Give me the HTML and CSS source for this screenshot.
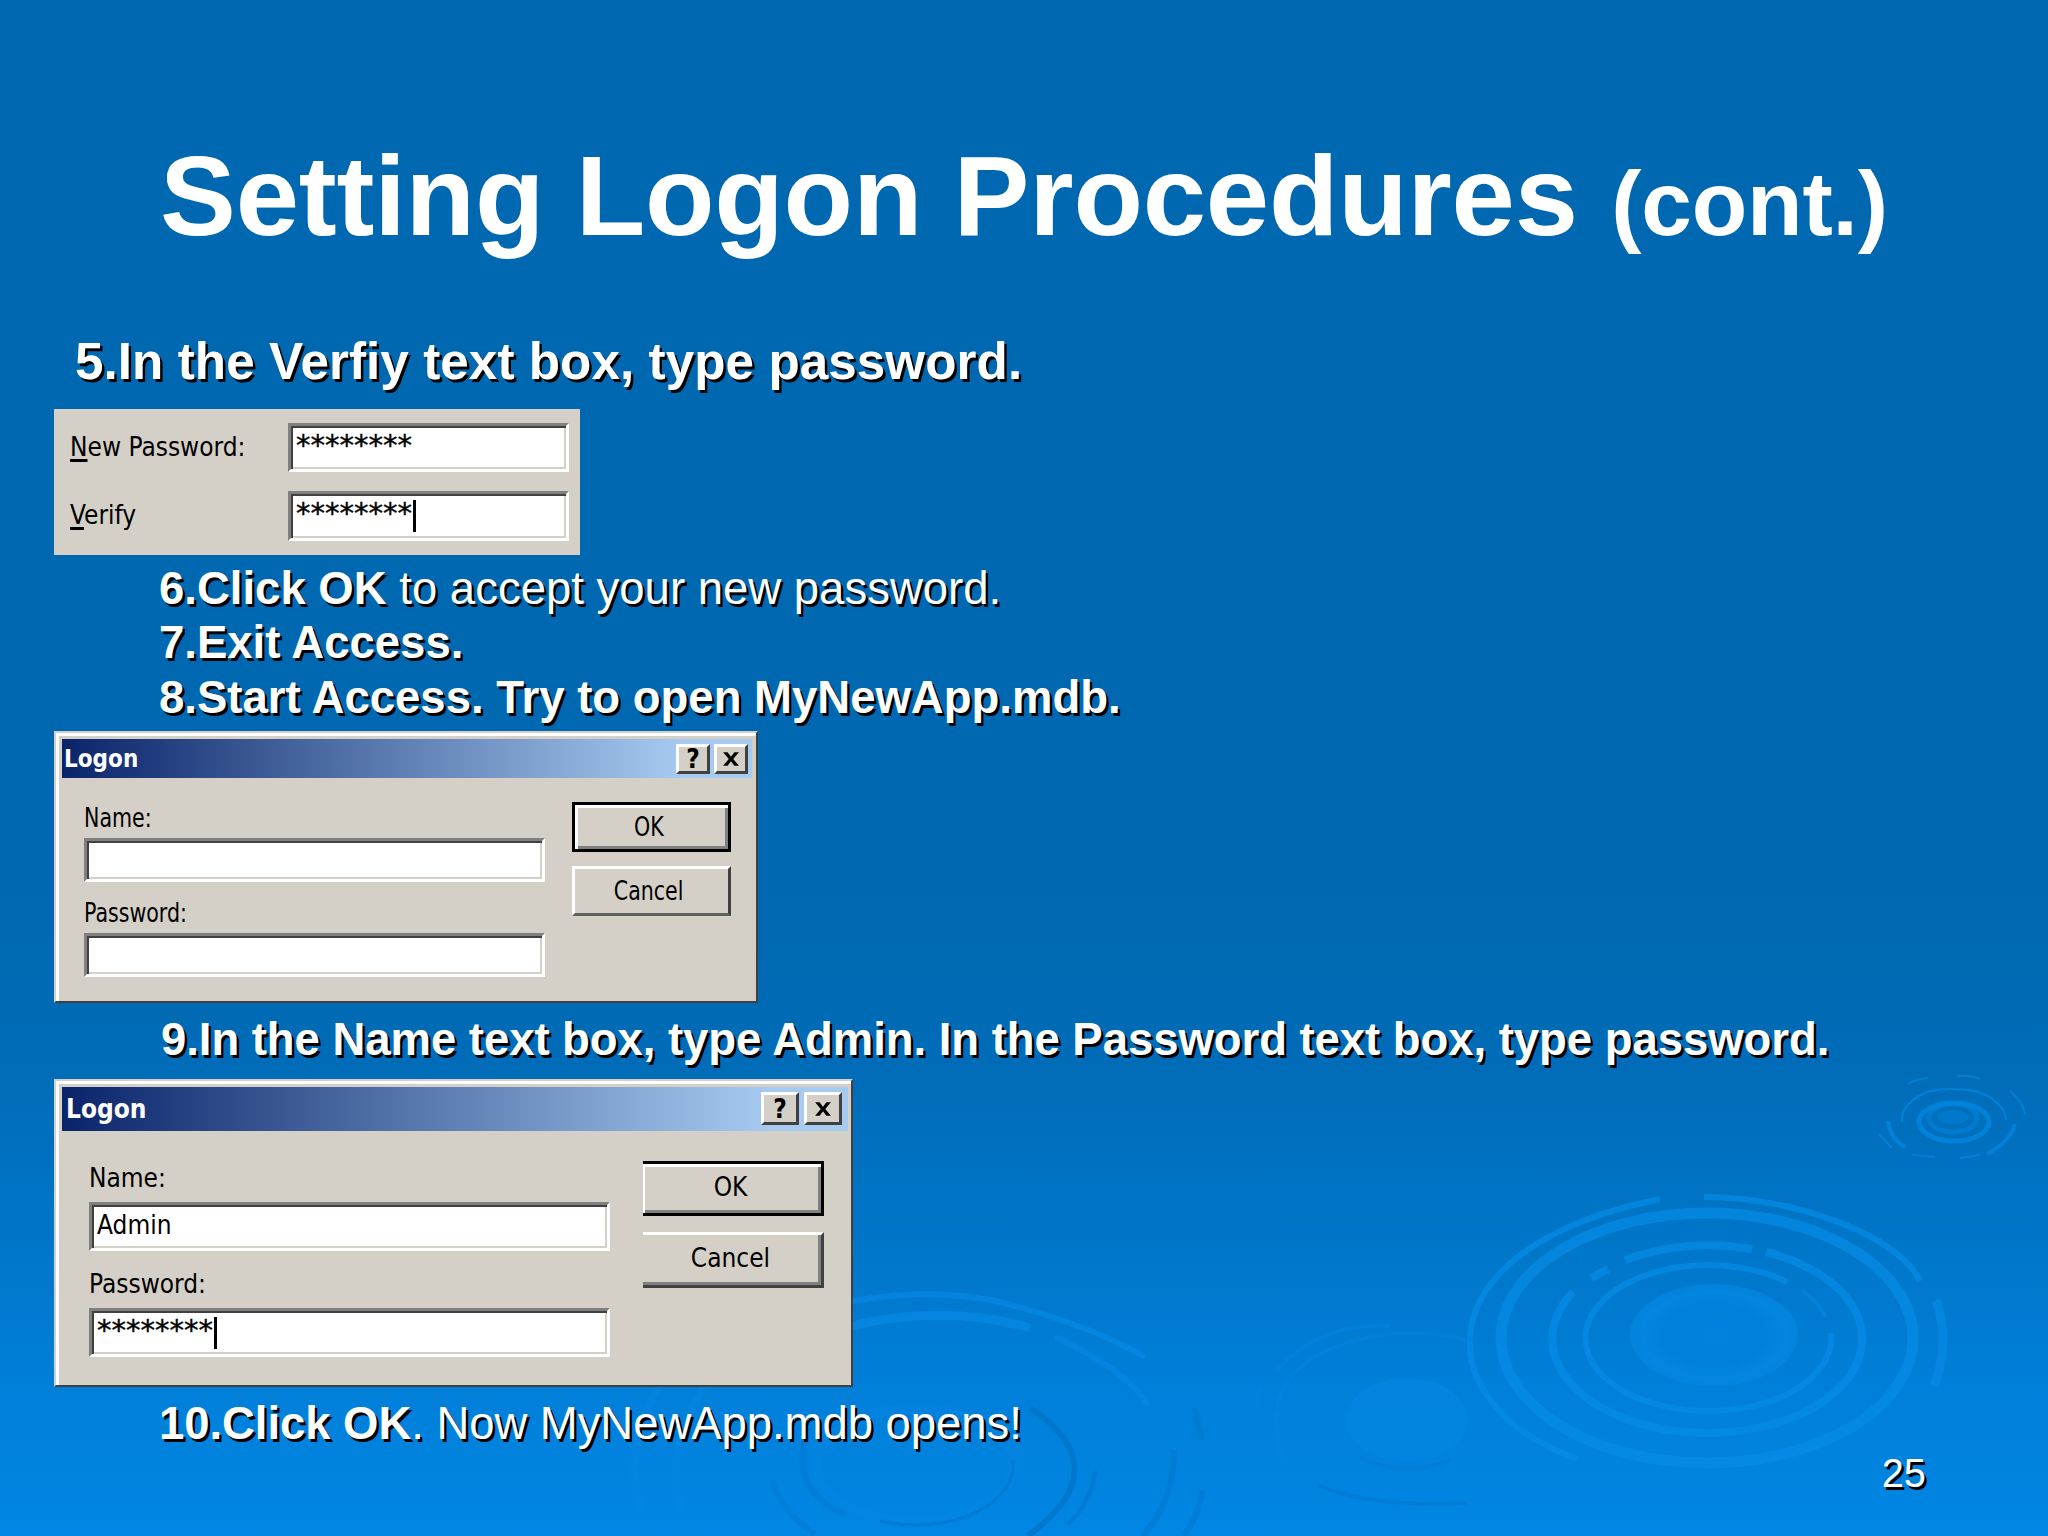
FILE: index.html
```html
<!DOCTYPE html>
<html lang="en">

<head>
    <meta charset="UTF-8">
    <meta name="viewport" content="width=device-width, initial-scale=1.0">
    <title>Setting Logon Procedures</title>
    <link rel="stylesheet" href="styles.css">
</head>

<body>
    <div class="slide">
        <svg class="ripples" viewBox="0 0 2048 1536" fill="none">
            <defs>
                <radialGradient id="drop">
                    <stop offset="0" stop-color="#0082df" />
                    <stop offset=".6" stop-color="#0080da" />
                    <stop offset=".85" stop-color="#0385e0" />
                    <stop offset="1" stop-color="#0386e1" stop-opacity=".7" />
                </radialGradient>
            </defs>
            <!-- large ripple -->
            <g stroke="#068ce6" stroke-opacity=".72">
                <path stroke-width="6" d="M1660 1199C1418 1248 1426 1405 1577 1459M1704 1197C1800 1197 1900 1238 1920 1281" />
                <path stroke-width="9" d="M1936 1300Q1951 1343 1934 1386" stroke-opacity=".6" />
                <ellipse stroke-width="11" cx="1707" cy="1338" rx="206" ry="125" />
                <path stroke-width="8" d="M1625 1260A155 94 0 0 1 1752 1249M1766 1252A155 94 0 1 1 1573 1292M1591 1278L1608 1269" />
                <path stroke-width="6" d="M1787 1282A123 73 0 1 0 1831 1333" />
                <path stroke-width="4" d="M1802 1290Q1820 1303 1825 1317" stroke-opacity=".5" />
            </g>
            <ellipse cx="1714" cy="1335" rx="84" ry="51" fill="url(#drop)" />
            <!-- small ripple -->
            <g stroke="#0386e0">
                <ellipse cx="1953" cy="1117" rx="16" ry="7" fill="#0079cd" stroke="none" />
                <ellipse cx="1953" cy="1118" rx="24" ry="14" stroke-width="5" stroke-opacity=".5" />
                <ellipse cx="1954" cy="1122" rx="35" ry="19" stroke-width="5" stroke-opacity=".8" />
                <path stroke-width="2" stroke-opacity=".8" d="M1902 1122A53 33 0 0 1 1930 1091Q1953 1087 1975 1091A53 33 0 0 1 2006 1120" />
                <path stroke-width="4" stroke-opacity=".8" d="M1888 1121Q1890 1138 1905 1147M2015 1124Q2010 1142 1987 1154" />
                <path stroke-width="2" stroke-opacity=".7" d="M1908 1084Q1915 1079 1928 1078M1957 1076Q1970 1075 1980 1079M2010 1091Q2024 1103 2025 1115M1879 1134L1892 1148M1912 1155L1935 1157M1960 1158L1980 1155" />
            </g>
            <!-- bottom ripple, mostly under the second dialog -->
            <g stroke="#0588e4" stroke-opacity=".75">
                <path stroke-width="6" d="M780 1320Q900 1280 1000 1302Q1090 1325 1145 1357" />
                <path stroke-width="9" d="M800 1342Q920 1297 1030 1328" />
                <path stroke-width="6" d="M1055 1337Q1130 1372 1148 1406" stroke-opacity=".6" />
                <path stroke-width="8" d="M660 1384Q615 1460 650 1536M706 1384Q655 1460 690 1536" stroke-opacity=".45" />
                <ellipse cx="915" cy="1465" rx="98" ry="56" stroke-width="10" stroke-opacity=".35" />
            </g>
            <g stroke="#0070c4" stroke-opacity=".5">
                <path stroke-width="3" d="M1013 1460A98 60 0 0 1 880 1521" />
                <path stroke-width="6" d="M1030 1408Q1120 1468 1028 1536" stroke-opacity=".6" />
                <path stroke-width="4" d="M1096 1470Q1090 1505 1067 1525" />
                <path stroke-width="6" d="M1174 1450Q1174 1500 1143 1536M1202 1490Q1198 1520 1183 1536M1194 1408L1202 1440" stroke-opacity=".35" />
                <path stroke-width="6" d="M806 1435Q790 1490 845 1515M772 1480Q780 1510 815 1534" stroke-opacity=".3" />
            </g>
            <!-- middle ripple -->
            <ellipse cx="1407" cy="1420" rx="61" ry="42" fill="#0387e4" fill-opacity=".6" />
            <g stroke="#0588e4" stroke-opacity=".35">
                <path stroke-width="4" d="M1277 1370Q1320 1322 1390 1326M1275 1420Q1280 1345 1400 1333Q1450 1333 1468 1342" />
                <path stroke-width="5" d="M1259 1386L1257 1410M1277 1410Q1275 1440 1285 1465" />
            </g>
            <g stroke="#0070c4" stroke-opacity=".4">
                <path stroke-width="4" d="M1318 1485Q1370 1508 1467 1503" />
                <path stroke-width="4" d="M1360 1458Q1405 1478 1450 1460" stroke-opacity=".25" />
            </g>
        </svg>

        <h1 class="title">Setting Logon Procedures <small>(cont.)</small></h1>

        <p class="step step-first">5.In the Verfiy text box, type password.</p>

        <div class="panel verify-panel">
            <label class="t new-password"><u>N</u>ew Password:</label>
            <div class="field"><span class="stars">********</span></div>
            <label class="t verify"><u>V</u>erify</label>
            <div class="field"><span class="stars">********</span><i class="caret"></i></div>
        </div>

        <div class="steps">
            <p class="step"><b>6.Click OK</b> to accept your new password.</p>
            <p class="step"><b>7.Exit Access.</b></p>
            <p class="step"><b>8.Start Access. Try to open MyNewApp.mdb.</b></p>
        </div>

        <div class="dialog logon-empty">
            <div class="titlebar">
                <span class="caption">Logon</span>
                <span class="tool">?</span>
                <span class="tool"><svg viewBox="0 0 16 14"><path d="M1 1h4l3 4 3-4h4l-5 6 5 6h-4l-3-4-3 4h-4l5-6z" /></svg></span>
            </div>
            <div class="content">
                <div class="form">
                    <label class="t">Name:</label>
                    <div class="field"></div>
                    <label class="t">Password:</label>
                    <div class="field"></div>
                </div>
                <div class="buttons">
                    <div class="btn default"><span class="t">OK</span></div>
                    <div class="btn"><span class="t">Cancel</span></div>
                </div>
            </div>
        </div>

        <p class="step step-nine"><b>9.In the Name text box, type Admin. In the Password text box, type password.</b></p>

        <div class="dialog logon-filled">
            <div class="titlebar">
                <span class="caption">Logon</span>
                <span class="tool">?</span>
                <span class="tool"><svg viewBox="0 0 16 14"><path d="M1 1h4l3 4 3-4h4l-5 6 5 6h-4l-3-4-3 4h-4l5-6z" /></svg></span>
            </div>
            <div class="content">
                <div class="form">
                    <label class="t">Name:</label>
                    <div class="field"><span class="t">Admin</span></div>
                    <label class="t">Password:</label>
                    <div class="field"><span class="stars">********</span><i class="caret"></i></div>
                </div>
                <div class="buttons">
                    <div class="btn default"><span class="t">OK</span></div>
                    <div class="btn"><span class="t">Cancel</span></div>
                </div>
            </div>
        </div>

        <div class="last-row">
            <p class="step"><b>10.Click OK</b>. Now MyNewApp.mdb opens!</p>
            <span class="page-number">25</span>
        </div>
    </div>
</body>

</html>
```

FILE: styles.css
```css
* {
    box-sizing: border-box;
    margin: 0;
    padding: 0;
}

body {
    width: 2048px;
    height: 1536px;
    overflow: hidden;
    font-family: "Liberation Sans", Arial, sans-serif;
}

.slide {
    position: relative;
    display: flex;
    flex-direction: column;
    align-items: flex-start;
    width: 2048px;
    height: 1536px;
    padding: 136px 0 0 54px;
    background: linear-gradient(#0068b0 0, #0068b0 58%, #006bb6 68%, #0074c5 79%, #007fd8 90%, #0086e4 100%);
    color: #fff;
}

/* background art */
.ripples {
    position: absolute;
    left: 0;
    top: 0;
    width: 2048px;
    height: 1536px;
}

.slide > :not(.ripples) {
    position: relative;
    flex-shrink: 0;
}

.title {
    height: 120px;
    margin-left: 106px;
    font-size: 113.8px;
    line-height: 120px;
    letter-spacing: -0.2px;
    white-space: nowrap;
}

.title small {
    margin-left: 2px;
    font-size: 91px;
}

.step {
    height: 54.4px;
    font-size: 45.5px;
    line-height: 54.4px;
    white-space: nowrap;
    text-shadow: 2.5px 2.5px 0 #000;
}

.step-first {
    height: 56px;
    margin: 78px 0 0 21px;
    font-size: 51.2px;
    font-weight: bold;
    line-height: 56px;
    letter-spacing: 0.07px;
}

.steps {
    margin: 7px 0 0 105px;
}

/* small dialog text */
.t,
.caption,
.tool {
    font-family: "DejaVu Sans Condensed", "DejaVu Sans", sans-serif;
    font-stretch: condensed;
    font-size: 26px;
    line-height: 30px;
    white-space: nowrap;
    color: #000;
}

.t {
    display: inline-block;
    transform-origin: 0 50%;
}

.t u {
    text-decoration-thickness: 3px;
    text-underline-offset: 3px;
}

.field {
    display: flex;
    align-items: flex-start;
    background: #fff;
    border: 3px solid;
    border-color: #808080 #fff #fff #808080;
    box-shadow: inset 2px 2px #404040, inset -2px -2px #d4d0c8;
    color: #000;
}

.stars {
    margin-top: 3px;
    padding-left: 5px;
    font-family: "DejaVu Sans", sans-serif;
    font-size: 29px;
    line-height: 32px;
    -webkit-text-stroke: 0.4px #000;
}

.caret {
    width: 3px;
    height: 32px;
    margin: 6px 0 0 1px;
    background: #000;
}

.panel,
.dialog {
    background: #d4d0c8;
}

.verify-panel {
    display: grid;
    grid-template-columns: 218px 281px;
    grid-template-rows: 49px 50px;
    row-gap: 19px;
    width: 526px;
    height: 146px;
    margin-top: 19px;
    padding: 14px 0 0 16px;
}

.verify-panel .t {
    margin-top: 9px;
    justify-self: start;
}

.dialog {
    border: 2px solid;
    border-color: #d4d0c8 #404040 #404040 #d4d0c8;
    box-shadow: inset 3px 3px #fff;
}

.titlebar {
    display: flex;
    align-items: center;
    background: linear-gradient(90deg, #0a246a, #a6caf0 90%);
}

.caption {
    margin-right: auto;
    font-size: 24px;
    font-weight: bold;
    color: #fff;
}

.tool {
    display: flex;
    align-items: center;
    justify-content: center;
    background: #d4d0c8;
    border: 3px solid;
    border-color: #fff #404040 #404040 #fff;
    font-weight: bold;
    line-height: 24px;
}

.tool svg {
    width: 18px;
    height: 16px;
}

.content {
    display: flex;
}

.form {
    display: flex;
    flex-direction: column;
    align-items: flex-start;
}

.form .field {
    width: 100%;
}

.btn {
    display: flex;
    align-items: center;
    justify-content: center;
    border: 3px solid;
    border-color: #fff #404040 #606060 #fff;
}

.btn .t {
    transform-origin: 50% 50%;
}

.btn.default {
    border-color: #000;
    box-shadow: inset 3px 3px #fff, inset -3px -3px #808080;
}

/* empty logon dialog */
.logon-empty {
    width: 704px;
    height: 272px;
    margin-top: 6px;
    padding: 6px 4px 0 6px;
}

.logon-empty .titlebar {
    height: 39px;
    padding: 0 4px 0 2px;
}

.logon-empty .tool {
    width: 34px;
    height: 30px;
    margin-left: 4px;
}

.logon-empty .content {
    padding: 24px 0 0 22px;
}

.logon-empty .form {
    width: 461px;
}

.logon-empty .t {
    transform: scaleX(.88);
}

.logon-empty .form .t {
    height: 36px;
    padding-top: 1px;
}

.logon-empty .field {
    height: 44px;
    margin-bottom: 15px;
}

.logon-empty .buttons {
    margin-left: 27px;
}

.logon-empty .btn {
    width: 159px;
    height: 50px;
    margin-bottom: 14px;
    padding-right: 5px;
}

.step-nine {
    margin: 10px 0 0 107px;
    letter-spacing: -0.05px;
}

/* filled logon dialog */
.logon-filled {
    width: 799px;
    height: 308px;
    margin-top: 11px;
    padding: 6px 3px 0 6px;
}

.logon-filled .titlebar {
    height: 44px;
    padding: 0 6px 0 4px;
}

.logon-filled .caption {
    font-size: 26px;
}

.logon-filled .tool {
    width: 38px;
    height: 33px;
    margin-left: 5px;
}

.logon-filled .content {
    padding: 30px 0 0 27px;
}

.logon-filled .form {
    width: 521px;
}

.logon-filled .form label {
    height: 41px;
    padding-top: 2px;
}

.logon-filled .field {
    height: 49px;
    margin-bottom: 16px;
}

.logon-filled .field .t {
    padding: 5px 0 0 5px;
}

.logon-filled .buttons {
    margin-left: 33px;
}

.logon-filled .btn {
    width: 181px;
    height: 56px;
    margin-bottom: 15px;
    padding: 0 3px 3px 0;
    border-left: 0;
    border-bottom-color: #404040;
    box-shadow: inset -3px -3px #808080;
}

.logon-filled .btn.default {
    height: 55px;
    margin-bottom: 16px;
    border-bottom-color: #000;
    box-shadow: inset 2px 3px #fff, inset -3px -3px #808080;
}

.last-row {
    display: flex;
    align-items: flex-start;
    margin: 10px 0 0 105px;
}

.last-row .step {
    letter-spacing: -0.06px;
}

.page-number {
    margin: 53px 0 0 860px;
    font-size: 39.8px;
    line-height: 46px;
    text-shadow: 2.5px 2.5px 0 #000;
}
```
